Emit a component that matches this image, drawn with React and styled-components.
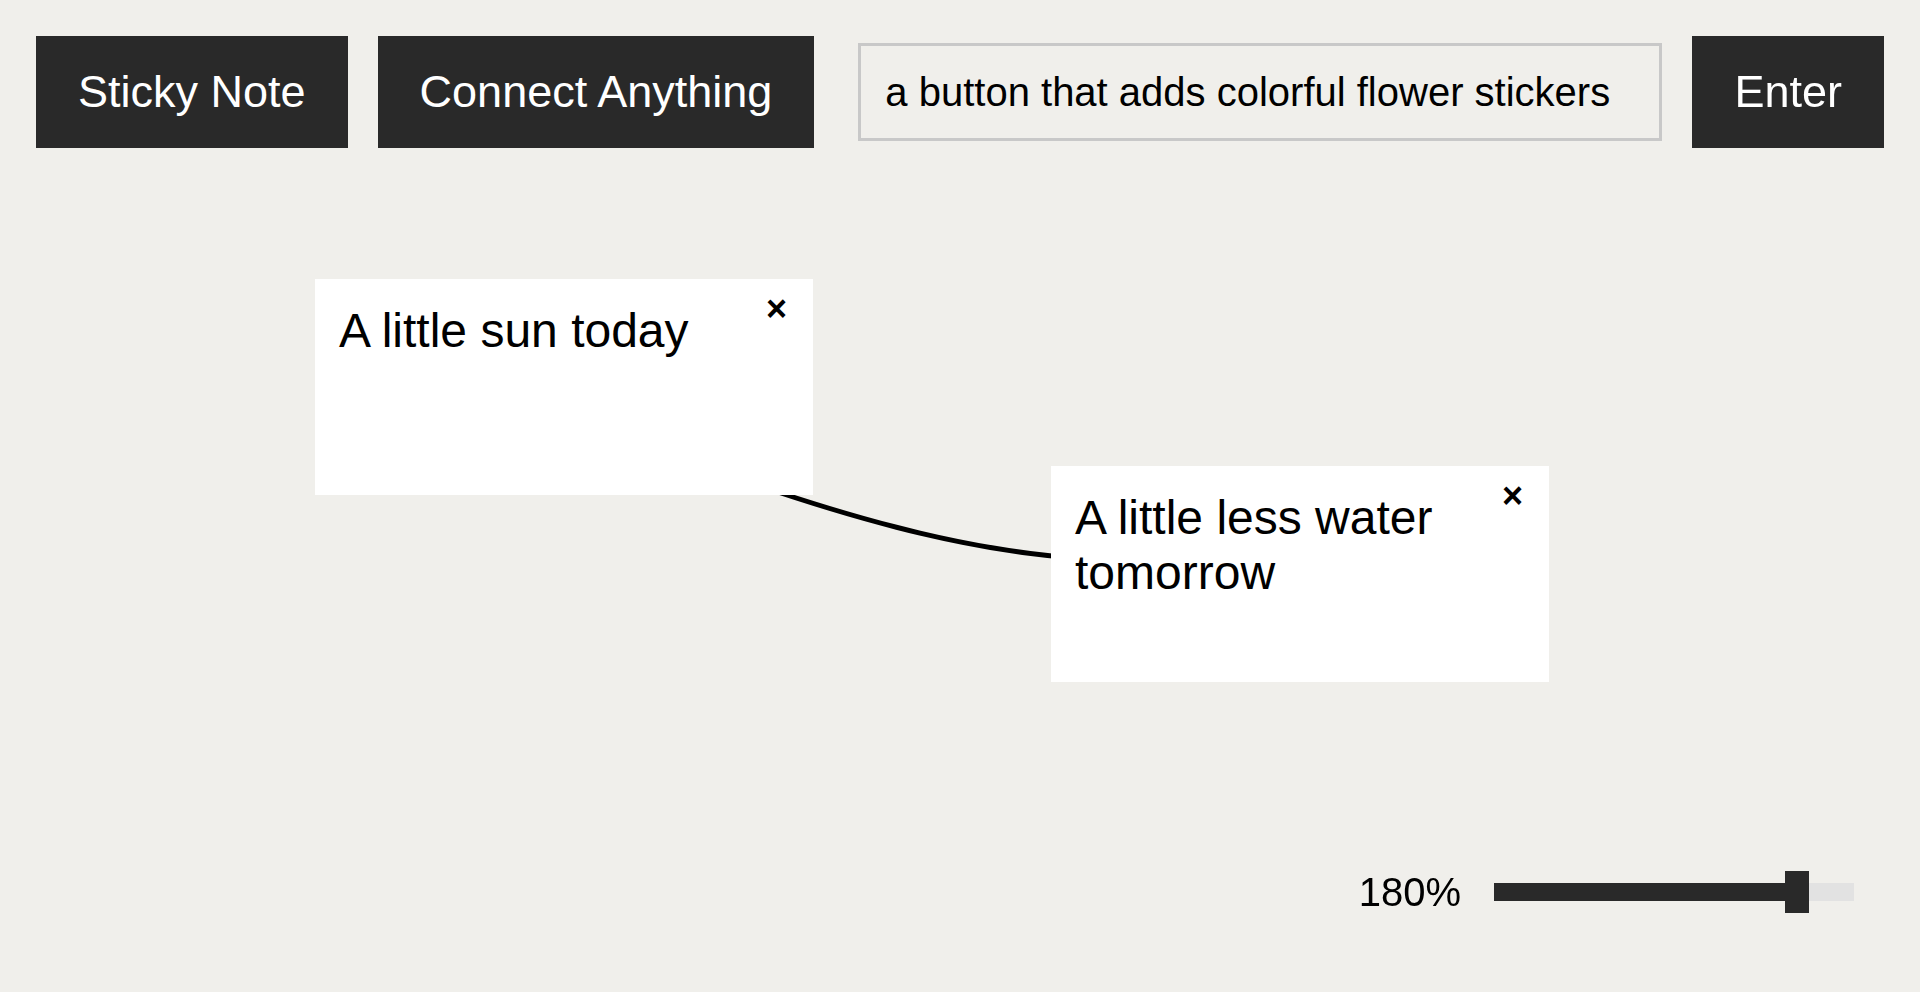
import React, { useEffect, useRef } from "react";
import styled, { createGlobalStyle } from "styled-components";

const GlobalStyle = createGlobalStyle`
  html, body {
    margin: 0;
    padding: 0;
    background: #f0efeb;
    font-family: "Liberation Sans", Arial, sans-serif;
    color: #000;
  }
  * {
    box-sizing: border-box;
  }
`;

const Page = styled.div`
  display: flex;
  flex-direction: column;
  height: 100vh;
  overflow: hidden;
`;

const Toolbar = styled.div`
  display: flex;
  align-items: center;
  gap: 30px;
  padding: 36px 36px 0;
`;

const ToolButton = styled.button`
  height: 112px;
  padding: 0 42px;
  border: none;
  border-radius: 0;
  background: #292929;
  color: #fff;
  font-family: "Liberation Sans", Arial, sans-serif;
  font-size: 45px;
  white-space: nowrap;
  cursor: pointer;
`;

const PromptInput = styled.input`
  flex: 1;
  min-width: 0;
  height: 98px;
  margin-left: 14px;
  padding: 0 24px;
  border: 3px solid #c8c8c8;
  background: transparent;
  font-family: "Liberation Sans", Arial, sans-serif;
  font-size: 40px;
  color: #000;
  caret-color: #000;
  outline: none;
`;

const Board = styled.div`
  position: relative;
  flex: 1;
`;

const Wires = styled.svg`
  position: absolute;
  inset: 0;
  width: 100%;
  height: 100%;
  overflow: visible;
`;

const Note = styled.div`
  position: absolute;
  left: ${(p) => p.$x}px;
  top: ${(p) => p.$y}px;
  width: 498px;
  height: 216px;
  padding: 24px;
  background: #fff;
  font-size: 48px;
  line-height: normal;
`;

const NoteText = styled.div`
  padding-right: 20px;
`;

const CloseButton = styled.button`
  position: absolute;
  top: 12px;
  right: 26px;
  padding: 0;
  border: none;
  background: none;
  font-family: "Liberation Sans", Arial, sans-serif;
  font-size: 36px;
  font-weight: 700;
  line-height: 1;
  color: #000;
  cursor: pointer;
`;

const ZoomBar = styled.div`
  display: flex;
  align-items: center;
  justify-content: flex-end;
  gap: 33px;
  height: 42px;
  margin: 0 66px 79px 0;
`;

const ZoomLabel = styled.span`
  font-size: 40px;
`;

const Track = styled.div`
  position: relative;
  width: 360px;
  height: 18px;
  background: #e2e2e2;
`;

const Fill = styled.div`
  height: 100%;
  background: #292929;
`;

const Thumb = styled.div`
  position: absolute;
  top: -12px;
  width: 24px;
  height: 42px;
  background: #292929;
`;

const notes = [
  { id: 1, x: 315, y: 131, text: "A little sun today" },
  { id: 2, x: 1051, y: 318, text: "A little less water tomorrow" },
];

const ZOOM = 180;
const MIN = 50;
const MAX = 200;

export default function App() {
  const inputRef = useRef(null);

  useEffect(() => {
    const el = inputRef.current;
    if (el) {
      el.focus();
      el.setSelectionRange(el.value.length, el.value.length);
    }
  }, []);

  const pct = (ZOOM - MIN) / (MAX - MIN);
  const thumbLeft = pct * (360 - 24);

  return (
    <Page>
      <GlobalStyle />
      <Toolbar>
        <ToolButton>Sticky Note</ToolButton>
        <ToolButton>Connect Anything</ToolButton>
        <PromptInput
          ref={inputRef}
          defaultValue="a button that adds colorful flower stickers"
        />
        <ToolButton>Enter</ToolButton>
      </Toolbar>
      <Board>
        <Wires>
          <path
            d="M760,338 C867,374.4 973,403 1080,410.5"
            fill="none"
            stroke="#000"
            strokeWidth="5"
          />
        </Wires>
        {notes.map((n) => (
          <Note key={n.id} $x={n.x} $y={n.y}>
            <NoteText>{n.text}</NoteText>
            <CloseButton>×</CloseButton>
          </Note>
        ))}
      </Board>
      <ZoomBar>
        <ZoomLabel>{ZOOM}%</ZoomLabel>
        <Track>
          <Fill style={{ width: thumbLeft + 12 }} />
          <Thumb style={{ left: thumbLeft }} />
        </Track>
      </ZoomBar>
    </Page>
  );
}
